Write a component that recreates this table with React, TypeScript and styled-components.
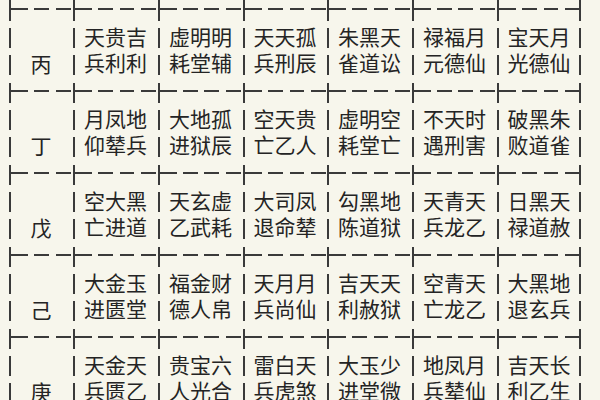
import { Fragment } from "react";
import styled, { createGlobalStyle } from "styled-components";

const ink = "#3a3a3a";

const GlobalStyle = createGlobalStyle`
  html, body {
    margin: 0;
    padding: 0;
    height: 400px;
    overflow: hidden;
    background: #f7f6ec;
  }
`;

// dashed vertical stroke: one dash on the crossing, one beside each text line
const vLine = `linear-gradient(to bottom, ${ink} 0 13px, transparent 13px 20px, ${ink} 20px 40px, transparent 40px 47px, ${ink} 47px 67px, transparent 67px 75px, ${ink} 75px 82px)`;
const hLine = `repeating-linear-gradient(to right, transparent 0 4px, ${ink} 4px 19px, transparent 19px 21.25px)`;
const arm = `linear-gradient(${ink}, ${ink})`;

const Table = styled.div`
  display: grid;
  grid-template-columns: 64px 85px 85px 84px 85px 85px 84px;
  grid-template-rows: 8px repeat(5, 82px);
  margin-left: 9px;
  width: 572px;
  font-family: "Noto Sans CJK SC", "Noto Sans", sans-serif;
  color: #242424;
`;

const Stub = styled.div<{ $last?: boolean }>`
  background-image: ${arm}${props => (props.$last ? `, ${arm}` : "")};
  background-size: 2px 100%${props => (props.$last ? ", 2px 100%" : "")};
  background-position: left top${props => (props.$last ? ", right top" : "")};
  background-repeat: no-repeat;
`;

const Cell = styled.div<{ $last?: boolean }>`
  display: flex;
  flex-direction: column;
  align-items: center;
  padding-top: 15px;
  font-size: 21px;
  line-height: 26px;
  background-image: ${vLine}, ${hLine}, ${arm}${props => (props.$last ? `, ${vLine}` : "")};
  background-size: 2px 100%, 100% 2px, 6px 2px${props => (props.$last ? ", 2px 100%" : "")};
  background-position: left top, left top, left top${props => (props.$last ? ", right top" : "")};
  background-repeat: no-repeat;
`;

const Stem = styled(Cell)`
  padding-top: 42px;
`;

const Line = styled.div`
  white-space: nowrap;
`;

interface IRow {
  stem: string;
  cells: [string, string][];
}

const rows: IRow[] = [
  {
    stem: "丙",
    cells: [["天贵吉", "兵利利"], ["虚明明", "耗堂辅"], ["天天孤", "兵刑辰"], ["朱黑天", "雀道讼"], ["禄福月", "元德仙"], ["宝天月", "光德仙"]],
  },
  {
    stem: "丁",
    cells: [["月凤地", "仰辇兵"], ["大地孤", "进狱辰"], ["空天贵", "亡乙人"], ["虚明空", "耗堂亡"], ["不天时", "遇刑害"], ["破黑朱", "败道雀"]],
  },
  {
    stem: "戊",
    cells: [["空大黑", "亡进道"], ["天玄虚", "乙武耗"], ["大司凤", "退命辇"], ["勾黑地", "陈道狱"], ["天青天", "兵龙乙"], ["日黑天", "禄道赦"]],
  },
  {
    stem: "己",
    cells: [["大金玉", "进匮堂"], ["福金财", "德人帛"], ["天月月", "兵尚仙"], ["吉天天", "利赦狱"], ["空青天", "亡龙乙"], ["大黑地", "退玄兵"]],
  },
  {
    stem: "庚",
    cells: [["天金天", "兵匮乙"], ["贵宝六", "人光合"], ["雷白天", "兵虎煞"], ["大玉少", "进堂微"], ["地凤月", "兵辇仙"], ["吉天长", "利乙生"]],
  },
];

export default function App() {
  return (
    <>
      <GlobalStyle />
      <Table>
        {Array.from({ length: 7 }).map((_, i) => (
          <Stub key={"s" + i} $last={i === 6} />
        ))}
        {rows.map(row => (
          <Fragment key={row.stem}>
            <Stem>
              <Line>{row.stem}</Line>
            </Stem>
            {row.cells.map((c, i) => (
              <Cell key={i} $last={i === 5}>
                <Line>{c[0]}</Line>
                <Line>{c[1]}</Line>
              </Cell>
            ))}
          </Fragment>
        ))}
      </Table>
    </>
  );
}
